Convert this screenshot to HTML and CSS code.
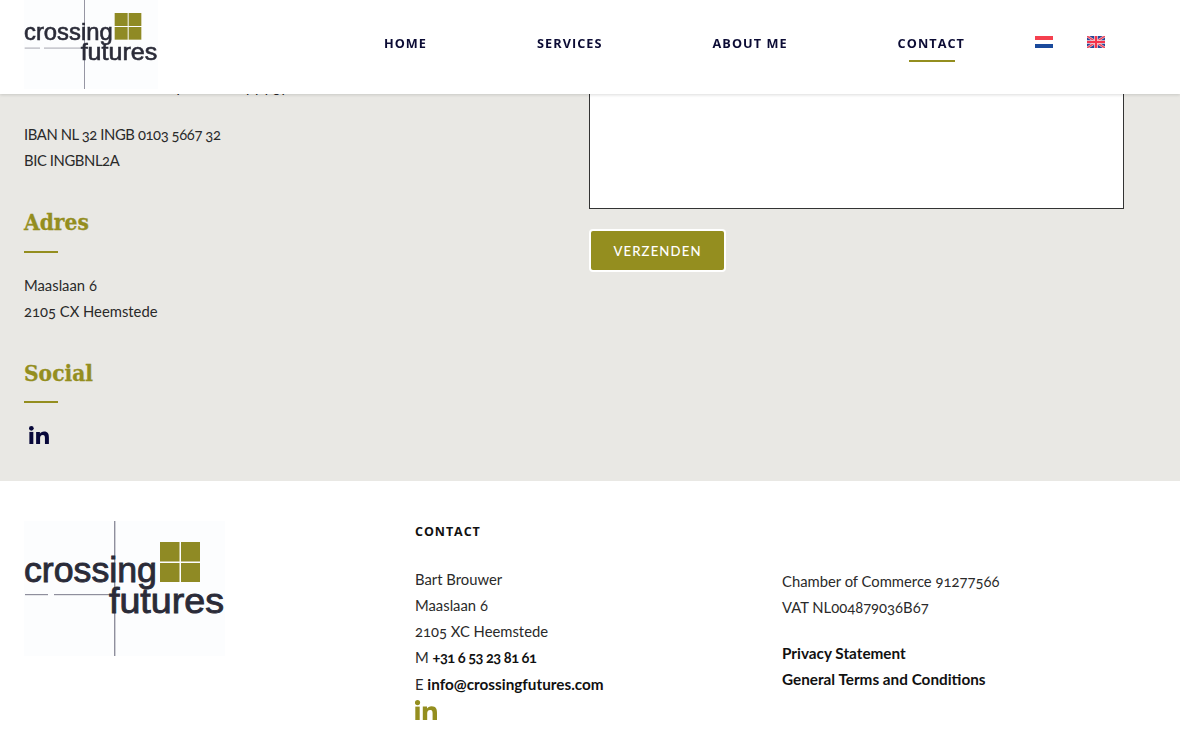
FILE: index.html
```html
<!DOCTYPE html>
<html lang="nl">
<head>
<meta charset="utf-8">
<title>Crossing Futures - Contact</title>
<link rel="stylesheet" href="styles.css">
</head>
<body>
<svg class="defs" width="0" height="0" aria-hidden="true">
  <symbol id="logo" viewBox="0 0 201 135">
    <rect class="logo-bg" width="201" height="135"/>
    <rect class="logo-line" x="90" y="0" width="1.4" height="135"/>
    <rect class="logo-line" x="1" y="73" width="23" height="1.2"/>
    <rect class="logo-line" x="30" y="73" width="60" height="1.2"/>
    <rect class="logo-sq" x="136" y="21" width="19.5" height="19.5"/>
    <rect class="logo-sq" x="157" y="21" width="19" height="19.5"/>
    <rect class="logo-sq" x="136" y="42" width="19.5" height="19"/>
    <rect class="logo-sq" x="157" y="42" width="19" height="19"/>
    <text class="logo-text" x="0" y="61" textLength="133" lengthAdjust="spacingAndGlyphs">crossing</text>
    <text class="logo-text" x="85" y="92" textLength="115" lengthAdjust="spacingAndGlyphs">futures</text>
  </symbol>
  <symbol id="in" viewBox="0 0 22 20">
    <rect x="0.3" y="6.6" width="4.4" height="13.4"/>
    <circle cx="2.5" cy="2.6" r="2.6"/>
    <path d="M7.8 6.6h4.2v1.9c.7-1.2 2.3-2.3 4.6-2.3 4.4 0 5.4 2.8 5.4 6.6V20h-4.4v-6.3c0-1.7-.1-3.7-2.4-3.7s-3 1.8-3 3.6V20H7.8z"/>
  </symbol>
</svg>

<header class="site-header">
  <a class="header-logo" href="#"><svg class="logo-small"><use href="#logo"/></svg></a>
  <nav class="main-nav">
    <a href="#">HOME</a>
    <a href="#">SERVICES</a>
    <a href="#">ABOUT ME</a>
    <a href="#" class="active">CONTACT</a>
  </nav>
  <div class="flags">
    <svg class="flag" viewBox="0 0 18 12"><rect width="18" height="4" fill="#f5404f"/><rect y="4" width="18" height="4" fill="#fff"/><rect y="8" width="18" height="4" fill="#1a4a9c"/></svg>
    <svg class="flag" viewBox="0 0 18 12"><rect width="18" height="12" fill="#25479a"/><path d="M0 0l18 12M18 0L0 12" stroke="#f7b9c2" stroke-width="2.6"/><path d="M0 0l18 12M18 0L0 12" stroke="#ee4057" stroke-width="1.2"/><path d="M9 0v12M0 6h18" stroke="#fbd5da" stroke-width="3.6"/><path d="M9 0v12M0 6h18" stroke="#f4344c" stroke-width="2.2"/></svg>
  </div>
</header>

<main class="contact-section">
  <div class="contact-left">
    <p class="hidden-line">Kamer van Koophandel copy pgy</p>
    <p class="text"><span class="caps">IBAN NL 32 INGB 0103 5667 32</span><br><span class="caps">BIC INGBNL2A</span></p>
    <h2 class="sec-title">Adres</h2>
    <p class="text">Maaslaan 6<br>2105 CX Heemstede</p>
    <h2 class="sec-title sec-social">Social</h2>
    <a class="social-in" href="#"><svg class="in-dark"><use href="#in"/></svg></a>
  </div>
  <form class="contact-right">
    <div class="message-box"></div>
    <button class="send" type="button">VERZENDEN</button>
  </form>
</main>

<footer class="site-footer">
  <div class="foot-logo"><svg class="logo-large"><use href="#logo"/></svg></div>
  <div class="foot-contact">
    <h3 class="foot-title">CONTACT</h3>
    <p class="text">Bart Brouwer<br>Maaslaan 6<br>2105 XC Heemstede<br>M <b class="phone">+31 6 53 23 81 61</b><br>E <b>info@crossingfutures.com</b></p>
    <a class="foot-in" href="#"><svg class="in-olive"><use href="#in"/></svg></a>
  </div>
  <div class="foot-legal">
    <p class="text">Chamber of Commerce 91277566<br>VAT NL004879036B67</p>
    <p class="text links"><b>Privacy Statement</b><br><b>General Terms and Conditions</b></p>
  </div>
</footer>
</body>
</html>
```
FILE: styles.css
```css
* { box-sizing: border-box; }
html, body { margin: 0; padding: 0; }
body {
  font-family: "Lato", "Open Sans", sans-serif;
  color: #222;
  background: #fff;
  overflow: hidden;
  height: 736px;
}
a { color: inherit; text-decoration: none; }
p, h2, h3 { margin: 0; }
.defs { position: absolute; }

.logo-bg { fill: #fcfdfe; }
.logo-line { fill: #8f8f9d; }
.logo-sq { fill: #8f8a24; }
.logo-text {
  font-family: "Liberation Sans", sans-serif;
  font-size: 35.5px;
  font-weight: 400;
  fill: #2a2b38;
  stroke: #2a2b38;
  stroke-width: .9px;
}

.site-header {
  position: fixed;
  top: 0; left: 0; right: 0;
  height: 94px;
  background: #fff;
  box-shadow: 0 1px 3px rgba(0,0,0,.14);
  display: flex;
  align-items: flex-start;
  padding: 0 75px 0 24px;
  z-index: 5;
}
.header-logo { display: block; margin-top: -1px; height: 90px; }
.logo-small { display: block; width: 134px; height: 90px; }
.main-nav {
  margin-left: auto;
  display: flex;
  gap: 110px;
  padding-top: 35px;
}
.main-nav a {
  position: relative;
  font-family: "Open Sans", sans-serif;
  font-size: 12.7px;
  font-weight: 700;
  letter-spacing: 1.05px;
  line-height: 17px;
  color: #0c0c35;
  white-space: nowrap;
}
.main-nav a.active::after {
  content: "";
  position: absolute;
  left: 11px;
  right: 10px;
  top: 25px;
  height: 2px;
  background: #948e1f;
}
.flags { display: flex; gap: 34px; margin-left: 70px; padding-top: 36px; }
.flag { display: block; width: 18px; height: 12px; }

.contact-section {
  background: #e9e8e4;
  height: 481px;
  display: grid;
  grid-template-columns: 565px 535px;
  padding: 0 0 0 24px;
}
.text {
  font-size: 14.8px;
  line-height: 26px;
  color: #2a2a2a;
  font-variant-numeric: oldstyle-nums;
}
.caps { letter-spacing: -.4px; }
.text b { font-weight: 700; font-size: 15.3px; color: #111; }
.text b.phone { font-size: 14.6px; letter-spacing: -.5px; }
.hidden-line { font-size: 14.5px; line-height: 26px; padding-top: 74px; padding-left: 56px; height: 100px; margin-bottom: 21px; }
.sec-title {
  font-family: "DejaVu Serif Condensed", "DejaVu Serif", serif;
  font-size: 22.5px;
  font-weight: 700;
  -webkit-text-stroke: .3px #948e1f;
  line-height: 30px;
  color: #948e1f;
  margin-top: 34px;
  padding-bottom: 16px;
  margin-bottom: 19px;
  position: relative;
}
.sec-social { padding-bottom: 15px; }
.sec-title::after {
  content: "";
  position: absolute;
  left: 0;
  bottom: 0;
  width: 34px;
  height: 2px;
  background: #948e1f;
}
.social-in { display: block; margin: 23px 0 0 5px; }
.in-dark { display: block; width: 20px; height: 18px; fill: #08083a; }

.contact-right { display: flex; flex-direction: column; align-items: flex-start; }
.message-box {
  width: 535px;
  height: 209px;
  background: #fff;
  border: 1px solid #333;
}
.send {
  margin-top: 20px;
  width: 137px;
  height: 43px;
  background: #948e1f;
  border: 2px solid #fff;
  border-radius: 4px;
  color: #fff;
  font-family: "Lato", sans-serif;
  font-size: 13.2px;
  font-weight: 500;
  letter-spacing: 1.1px;
  padding: 0;
}

.site-footer {
  display: grid;
  grid-template-columns: 391px 367px 1fr;
  padding: 40px 0 0 24px;
  background: #fff;
}
.logo-large { display: block; width: 201px; height: 135px; }
.foot-title {
  font-family: "Open Sans", sans-serif;
  font-size: 12.5px;
  font-weight: 700;
  letter-spacing: .95px;
  line-height: 20px;
  color: #111;
  padding-top: 1px;
  margin-bottom: 24px;
}
.foot-in { display: block; margin-top: 3px; }
.in-olive { display: block; width: 22px; height: 20px; fill: #948e1f; }
.foot-legal { padding-top: 47px; }
.links { margin-top: 20px; }
```
